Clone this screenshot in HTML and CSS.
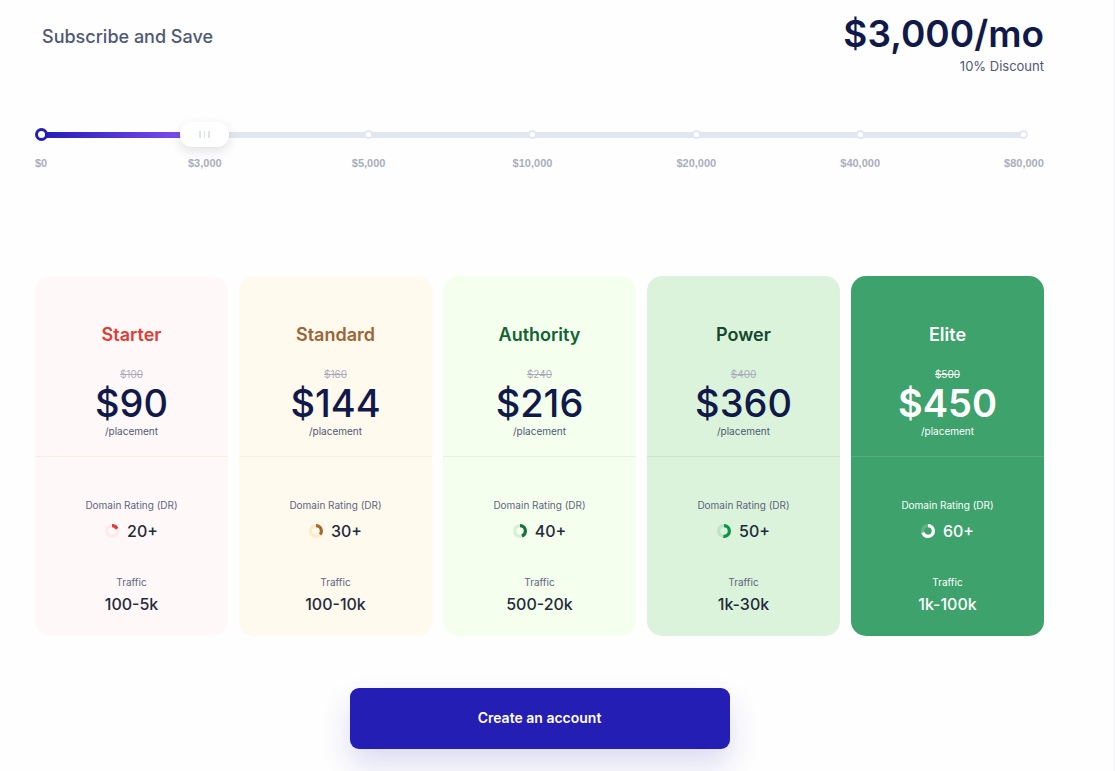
FILE: index.html
```
<!DOCTYPE html>
<html lang="en">

<head>
    <meta charset="UTF-8">
    <meta name="viewport" content="width=device-width, initial-scale=1.0">
    <title>Subscribe and Save</title>
    <link rel="stylesheet" href="styles.css">
</head>

<body>
    <main class="pricing">
        <header class="header">
            <label class="title" for="budget">Subscribe and Save</label>
            <div class="total">
                <div class="amount">$3,000/mo</div>
                <div class="discount">10% Discount</div>
            </div>
        </header>

        <div class="slider">
            <div class="track">
                <div class="fill"></div>
            </div>
            <ul class="steps">
                <li class="step start"><span class="dot"></span><span>$0</span></li>
                <li class="step"><span class="dot"></span><span>$3,000</span></li>
                <li class="step"><span class="dot"></span><span>$5,000</span></li>
                <li class="step"><span class="dot"></span><span>$10,000</span></li>
                <li class="step"><span class="dot"></span><span>$20,000</span></li>
                <li class="step"><span class="dot"></span><span>$40,000</span></li>
                <li class="step"><span class="dot"></span><span>$80,000</span></li>
            </ul>
            <input class="range" type="range" id="budget" min="0" max="6" step="1" value="1">
        </div>

        <section class="plans">
            <article class="plan starter">
                <div class="plan-top">
                    <h2>Starter</h2>
                    <del>$100</del>
                    <div class="price">$90</div>
                    <div class="unit">/placement</div>
                </div>
                <div class="plan-bottom">
                    <div class="caption">Domain Rating (DR)</div>
                    <div class="value rating">
                        <svg class="ring" viewBox="0 0 14 14">
                            <circle class="ring-bg" cx="7" cy="7" r="5.4" />
                            <circle class="ring-bar" cx="7" cy="7" r="5.4" pathLength="100" stroke-dasharray="18 100" />
                        </svg>
                        20+
                    </div>
                    <div class="caption">Traffic</div>
                    <div class="value">100-5k</div>
                </div>
            </article>

            <article class="plan standard">
                <div class="plan-top">
                    <h2>Standard</h2>
                    <del>$160</del>
                    <div class="price">$144</div>
                    <div class="unit">/placement</div>
                </div>
                <div class="plan-bottom">
                    <div class="caption">Domain Rating (DR)</div>
                    <div class="value rating">
                        <svg class="ring" viewBox="0 0 14 14">
                            <circle class="ring-bg" cx="7" cy="7" r="5.4" />
                            <circle class="ring-bar" cx="7" cy="7" r="5.4" pathLength="100" stroke-dasharray="36 100" />
                        </svg>
                        30+
                    </div>
                    <div class="caption">Traffic</div>
                    <div class="value">100-10k</div>
                </div>
            </article>

            <article class="plan authority">
                <div class="plan-top">
                    <h2>Authority</h2>
                    <del>$240</del>
                    <div class="price">$216</div>
                    <div class="unit">/placement</div>
                </div>
                <div class="plan-bottom">
                    <div class="caption">Domain Rating (DR)</div>
                    <div class="value rating">
                        <svg class="ring" viewBox="0 0 14 14">
                            <circle class="ring-bg" cx="7" cy="7" r="5.4" />
                            <circle class="ring-bar" cx="7" cy="7" r="5.4" pathLength="100" stroke-dasharray="44 100" />
                        </svg>
                        40+
                    </div>
                    <div class="caption">Traffic</div>
                    <div class="value">500-20k</div>
                </div>
            </article>

            <article class="plan power">
                <div class="plan-top">
                    <h2>Power</h2>
                    <del>$400</del>
                    <div class="price">$360</div>
                    <div class="unit">/placement</div>
                </div>
                <div class="plan-bottom">
                    <div class="caption">Domain Rating (DR)</div>
                    <div class="value rating">
                        <svg class="ring" viewBox="0 0 14 14">
                            <circle class="ring-bg" cx="7" cy="7" r="5.4" />
                            <circle class="ring-bar" cx="7" cy="7" r="5.4" pathLength="100" stroke-dasharray="52 100" />
                        </svg>
                        50+
                    </div>
                    <div class="caption">Traffic</div>
                    <div class="value">1k-30k</div>
                </div>
            </article>

            <article class="plan elite">
                <div class="plan-top">
                    <h2>Elite</h2>
                    <del>$500</del>
                    <div class="price">$450</div>
                    <div class="unit">/placement</div>
                </div>
                <div class="plan-bottom">
                    <div class="caption">Domain Rating (DR)</div>
                    <div class="value rating">
                        <svg class="ring" viewBox="0 0 14 14">
                            <circle class="ring-bg" cx="7" cy="7" r="5.4" />
                            <circle class="ring-bar" cx="7" cy="7" r="5.4" pathLength="100" stroke-dasharray="70 100" />
                        </svg>
                        60+
                    </div>
                    <div class="caption">Traffic</div>
                    <div class="value">1k-100k</div>
                </div>
            </article>
        </section>

        <button class="create" type="button">Create an account</button>
    </main>
</body>

</html>
```
FILE: styles.css
```
* {
    box-sizing: border-box;
}

body {
    margin: 0;
    font-family: Inter, "Liberation Sans", sans-serif;
    background-color: #fefefe;
    color: #1f2a3c;
    overflow-x: hidden;
}

.pricing {
    display: flex;
    flex-direction: column;
    min-height: 100vh;
    padding: 12px 69px 22px 35px;
    border-right: 2px solid #f9f9fd;
}

.header {
    display: flex;
    justify-content: space-between;
    padding-left: 7px;
}

.title {
    font-size: 18px;
    font-weight: 500;
    line-height: 50px;
    color: #4e5875;
}

.total {
    text-align: right;
}

.amount {
    font-size: 37px;
    font-weight: 600;
    line-height: 44px;
    color: #10194a;
}

.discount {
    font-size: 13px;
    line-height: 20px;
    color: #4e5875;
}

/* slider */
.slider {
    position: relative;
    margin: 52px 14px 0 0;
}

.track {
    height: 6px;
    margin: 4px 6px 0;
    border-radius: 3px;
    background-color: #e0e7f0;
}

.fill {
    width: 16%;
    height: 6px;
    background-image: linear-gradient(to right, #231db5, #8650f5);
}

.steps {
    position: absolute;
    top: 0;
    left: 0;
    right: 0;
    display: flex;
    justify-content: space-between;
    margin: 0;
    padding: 0;
    list-style: none;
    font-family: "Liberation Sans", Arial, sans-serif;
    font-size: 11px;
    font-weight: bold;
    line-height: 16px;
    color: #a9aebd;
}

.step {
    display: flex;
    flex-direction: column;
    align-items: center;
    gap: 14px;
    width: 12px;
}

.dot {
    width: 9px;
    height: 9px;
    margin: 2px 0;
    border: 2px solid #e2e8f3;
    border-radius: 50%;
    background-color: #fff;
}

.start .dot {
    width: 13px;
    height: 13px;
    margin: 0;
    border: 3px solid #231db5;
}

/* the thumb centre lines up with the first and last dots */
.range {
    position: absolute;
    top: -7px;
    left: -19px;
    width: calc(100% + 38px);
    height: 26px;
    margin: 0;
    background: none;
    appearance: none;
    cursor: pointer;
}

.range::-webkit-slider-thumb {
    appearance: none;
    width: 49px;
    height: 25px;
    border-radius: 12px;
    background:
        linear-gradient(#dbe4f0, #dbe4f0) 19px 9px / 2px 7px no-repeat,
        linear-gradient(#dbe4f0, #dbe4f0) 24px 9px / 1px 7px no-repeat,
        linear-gradient(#dbe4f0, #dbe4f0) 28px 9px / 2px 7px no-repeat,
        #fff;
    box-shadow: 0 4px 12px rgba(0, 0, 0, 0.12);
}

/* plans */
.plans {
    display: grid;
    grid-template-columns: repeat(5, 1fr);
    gap: 11px;
    margin-top: 138px;
}

.plan {
    border-radius: 15px;
    text-align: center;
}

.plan-top {
    padding: 46px 0 20px;
    border-bottom: 1px solid rgba(0, 0, 0, 0.05);
}

.plan h2 {
    margin: 0 0 20px;
    font-size: 18px;
    font-weight: 600;
    line-height: 26px;
}

.plan del {
    display: block;
    font-size: 10px;
    line-height: 12px;
    color: #aaabbb;
}

.price {
    font-size: 38px;
    font-weight: 500;
    line-height: 46px;
    color: #10194a;
}

.unit {
    font-size: 10px;
    line-height: 10px;
    color: #4e5875;
}

.plan-bottom {
    padding: 40px 0 18px;
}

.caption {
    font-size: 10px;
    line-height: 16px;
    color: #5d6580;
}

.value {
    font-size: 16px;
    font-weight: 500;
    line-height: 28px;
}

.rating {
    display: flex;
    justify-content: center;
    align-items: center;
    gap: 8px;
    margin: 4px 0 29px;
}

.ring {
    width: 14px;
    height: 14px;
}

.ring circle {
    fill: none;
    stroke-width: 3.2;
}

.ring-bar {
    transform: rotate(-90deg);
    transform-origin: center;
}

.starter {
    background-color: #fff8f8;
}

.starter h2 {
    color: #e23b36;
}

.starter .plan-top {
    border-color: #fdeae4;
}

.starter .ring-bg {
    stroke: #feeaea;
}

.starter .ring-bar {
    stroke: #e23b36;
}

.standard {
    background-color: #fff9ee;
}

.standard h2 {
    color: #9c6535;
}

.standard .plan-top {
    border-color: #fbeedb;
}

.standard .ring-bg {
    stroke: #ffebc4;
}

.standard .ring-bar {
    stroke: #a46a35;
}

.authority {
    background-color: #f5ffee;
}

.authority h2 {
    color: #116232;
}

.authority .ring-bg {
    stroke: #d4f0d8;
}

.authority .ring-bar {
    stroke: #15733c;
}

.power {
    background-color: #dbf3da;
}

.power h2 {
    color: #12482c;
}

.power .ring-bg {
    stroke: #bce5c5;
}

.power .ring-bar {
    stroke: #0f9447;
}

.elite {
    background-color: #3da26b;
}

.elite h2,
.elite del,
.elite .price,
.elite .unit,
.elite .caption,
.elite .value {
    color: #fff;
}

.elite .price {
    font-weight: 600;
}

.elite .plan-top {
    border-color: #54ae7d;
}

.elite .ring-bg {
    stroke: #62b487;
}

.elite .ring-bar {
    stroke: #fff;
}

.create {
    align-self: center;
    width: 380px;
    max-width: 100%;
    margin-top: 52px;
    padding: 19px 20px 21px;
    border: none;
    border-radius: 9px;
    background-color: #251eb5;
    box-shadow: 0 15px 30px rgba(37, 30, 181, 0.16);
    color: #fff;
    font-family: inherit;
    font-size: 14px;
    font-weight: 600;
    line-height: 21px;
    cursor: pointer;
}
```
